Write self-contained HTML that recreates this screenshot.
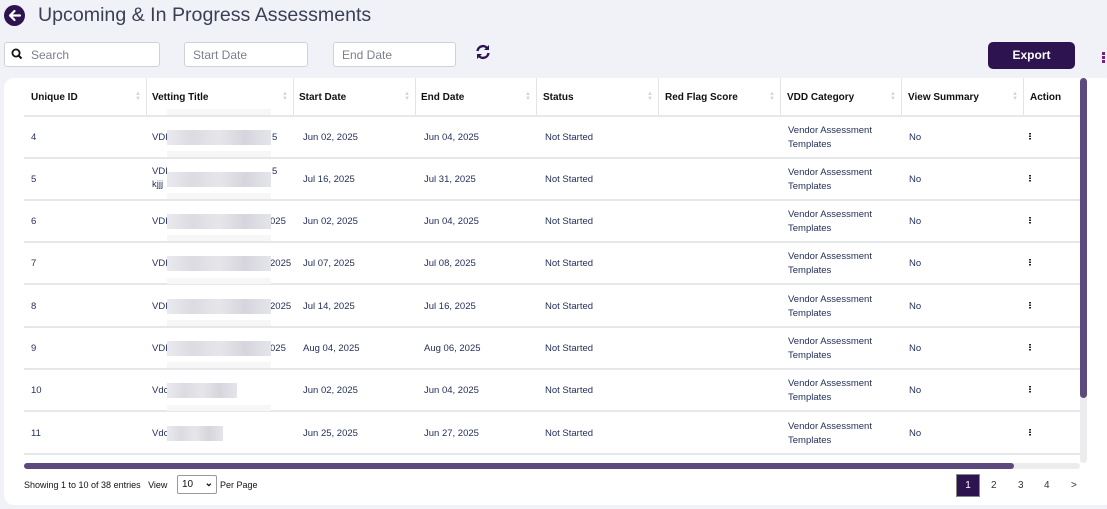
<!DOCTYPE html>
<html><head><meta charset="utf-8"><style>
*{box-sizing:border-box;margin:0;padding:0}
body{width:1107px;height:509px;background:#f1f2f7;font-family:"Liberation Sans",sans-serif;position:relative;overflow:hidden;color:#1d2340}
.a{position:absolute}
.inp{position:absolute;top:42px;height:25px;background:#fff;border:1px solid #cfd2da;border-radius:3px;font-size:12px;color:#7b7f8c;padding:5px 8px}
.card{position:absolute;left:4px;top:78px;width:1110px;height:427px;background:#fff;border-radius:10px}
.th{position:absolute;top:92px;font-size:10px;font-weight:bold;color:#111}
.vl{position:absolute;top:78px;height:37px;width:1px;background:#e3e4e8}
.hl{position:absolute;left:24px;width:1056px;height:2px;background:#e6e7ea}
.td{position:absolute;font-size:9.5px;color:#23305a}
.blur{position:absolute;background:linear-gradient(90deg,#e9e9ee,#dcdbe2,#e6e6ea,#d6d5dd,#e4e5ea);}
.sort{position:absolute;top:92px;font-size:6px;color:#d3d5da;line-height:5px}
</style></head><body>
<svg class="a" style="left:4px;top:5px" width="21" height="21" viewBox="0 0 21 21"><circle cx="10.5" cy="10.5" r="10.5" fill="#2e1351"/><path d="M16 10.5H6M10.5 6l-4.5 4.5 4.5 4.5" stroke="#fff" stroke-width="2.2" fill="none" stroke-linecap="round" stroke-linejoin="round"/></svg>
<div class="a" style="left:38px;top:4px;font-size:19.6px;color:#3b3f55">Upcoming &amp; In Progress Assessments</div>
<div class="inp" style="left:4px;width:156px;padding-left:26px">Search</div>
<svg class="a" style="left:11px;top:48px" width="12" height="12" viewBox="0 0 12 12"><circle cx="5" cy="5" r="3.6" stroke="#111" stroke-width="1.8" fill="none"/><path d="M7.6 7.6L10.5 10.5" stroke="#111" stroke-width="2"/></svg>
<div class="inp" style="left:184px;width:124px">Start Date</div>
<div class="inp" style="left:333px;width:123px">End Date</div>
<svg class="a" style="left:475px;top:44px" width="16" height="16" viewBox="0 0 16 16"><path d="M2.5 7A5.5 5.5 0 0 1 12.5 4.5M13.5 9A5.5 5.5 0 0 1 3.5 11.5" stroke="#2e1351" stroke-width="2.4" fill="none"/><path d="M14 1v5h-5z M2 15v-5h5z" fill="#2e1351"/></svg>
<div class="a" style="left:988px;top:42px;width:87px;height:27px;background:#2e1351;border-radius:5px;color:#fff;font-size:12px;font-weight:bold;text-align:center;line-height:27px">Export</div>
<div class="a" style="left:1102px;top:52px;width:3px;height:3px;background:#7a1e8c"></div>
<div class="a" style="left:1102px;top:56px;width:3px;height:3px;background:#7a1e8c"></div>
<div class="a" style="left:1102px;top:60px;width:3px;height:3px;background:#7a1e8c"></div>
<div class="card"></div>
<div class="th" style="left:31px">Unique ID</div><div class="sort" style="left:135px">▲<br>▼</div><div class="vl" style="left:146px"></div>
<div class="th" style="left:152px">Vetting Title</div><div class="sort" style="left:282px">▲<br>▼</div><div class="vl" style="left:293px"></div>
<div class="th" style="left:299px">Start Date</div><div class="sort" style="left:404px">▲<br>▼</div><div class="vl" style="left:415px"></div>
<div class="th" style="left:421px">End Date</div><div class="sort" style="left:525px">▲<br>▼</div><div class="vl" style="left:536px"></div>
<div class="th" style="left:543px">Status</div><div class="sort" style="left:647px">▲<br>▼</div><div class="vl" style="left:658px"></div>
<div class="th" style="left:665px">Red Flag Score</div><div class="sort" style="left:769px">▲<br>▼</div><div class="vl" style="left:780px"></div>
<div class="th" style="left:787px">VDD Category</div><div class="sort" style="left:890px">▲<br>▼</div><div class="vl" style="left:901px"></div>
<div class="th" style="left:908px">View Summary</div><div class="sort" style="left:1012px">▲<br>▼</div><div class="vl" style="left:1023px"></div>
<div class="th" style="left:1030px">Action</div>
<div class="hl" style="top:115px"></div>
<div id="rows"></div>
<script>
var d=[["4","VDI","5","Jun 02, 2025","Jun 04, 2025",104],["5","VDI","5","Jul 16, 2025","Jul 31, 2025",104],["6","VDI","025","Jun 02, 2025","Jun 04, 2025",104],["7","VDI","2025","Jul 07, 2025","Jul 08, 2025",104],["8","VDI","2025","Jul 14, 2025","Jul 16, 2025",104],["9","VDI","025","Aug 04, 2025","Aug 06, 2025",104],["10","Vdc","","Jun 02, 2025","Jun 04, 2025",70],["11","Vdc","","Jun 25, 2025","Jun 27, 2025",56]];
var h="";var tops=[116,158,200,242,285,327,369,412];
d.forEach(function(r,i){var t=tops[i],c=t+16;
h+='<div class="td" style="left:31px;top:'+c+'px">'+r[0]+'</div>';
h+='<div class="td" style="left:152px;top:'+(i==1?c-8:c)+'px">'+r[1]+(i==1?'<br><span style="line-height:16px">kjjj</span>':'')+'</div>';
h+='<div class="td" style="left:'+(r[2].length>2?270:272)+'px;top:'+(i==1?c-8:c)+'px">'+r[2]+'</div>';
h+='<div class="a" style="left:167px;top:'+(t-7)+'px;width:104px;height:6px;background:#f7f7f8"></div>';
h+='<div class="blur" style="left:167px;top:'+(c-2)+'px;width:'+r[5]+'px;height:15px"></div>';
h+='<div class="td" style="left:303px;top:'+c+'px">'+r[3]+'</div>';
h+='<div class="td" style="left:424px;top:'+c+'px">'+r[4]+'</div>';
h+='<div class="td" style="left:545px;top:'+c+'px">Not Started</div>';
h+='<div class="td" style="left:788px;top:'+(c-8)+'px;line-height:14px">Vendor Assessment<br>Templates</div>';
h+='<div class="td" style="left:909px;top:'+c+'px">No</div>';
h+='<div class="a" style="left:1029px;top:'+(c+1)+'px;width:2px;height:7px;background:repeating-linear-gradient(#1d2340 0 1.5px,transparent 1.5px 2.5px)"></div>';
h+='<div class="hl" style="top:'+(tops[i]+41)+'px"></div>';});
document.getElementById("rows").innerHTML=h;
</script>
<div class="a" style="left:1080px;top:78px;width:7px;height:385px;background:#ececee;border-radius:4px"></div>
<div class="a" style="left:1080px;top:78px;width:7px;height:320px;background:#5c4a7e;border-radius:4px"></div>
<div class="a" style="left:24px;top:463px;width:1056px;height:6px;background:#ececee;border-radius:3px"></div>
<div class="a" style="left:24px;top:463px;width:990px;height:6px;background:#5c4a7e;border-radius:3px"></div>
<div class="a" style="left:24px;top:480px;font-size:9px;color:#111">Showing 1 to 10 of 38 entries &nbsp; View</div>
<div class="a" style="left:177px;top:475px;width:40px;height:19px;border:1px solid #999;border-radius:2px;background:#fff;font-size:10px;padding:3px 4px;color:#111">10 <span style="position:absolute;right:3px;top:2px;font-weight:bold">&#8964;</span></div>
<div class="a" style="left:220px;top:480px;font-size:9px;color:#111">Per Page</div>
<div class="a" style="left:956px;top:474px;width:24px;height:23px;background:#2e1351;border:1px solid #888;color:#fff;font-size:10px;text-align:center;line-height:21px">1</div>
<div class="a" style="left:991px;top:480px;font-size:10px;color:#333">2</div>
<div class="a" style="left:1018px;top:480px;font-size:10px;color:#333">3</div>
<div class="a" style="left:1044px;top:480px;font-size:10px;color:#333">4</div>
<div class="a" style="left:1071px;top:480px;font-size:10px;color:#333">&gt;</div>
</body></html>
